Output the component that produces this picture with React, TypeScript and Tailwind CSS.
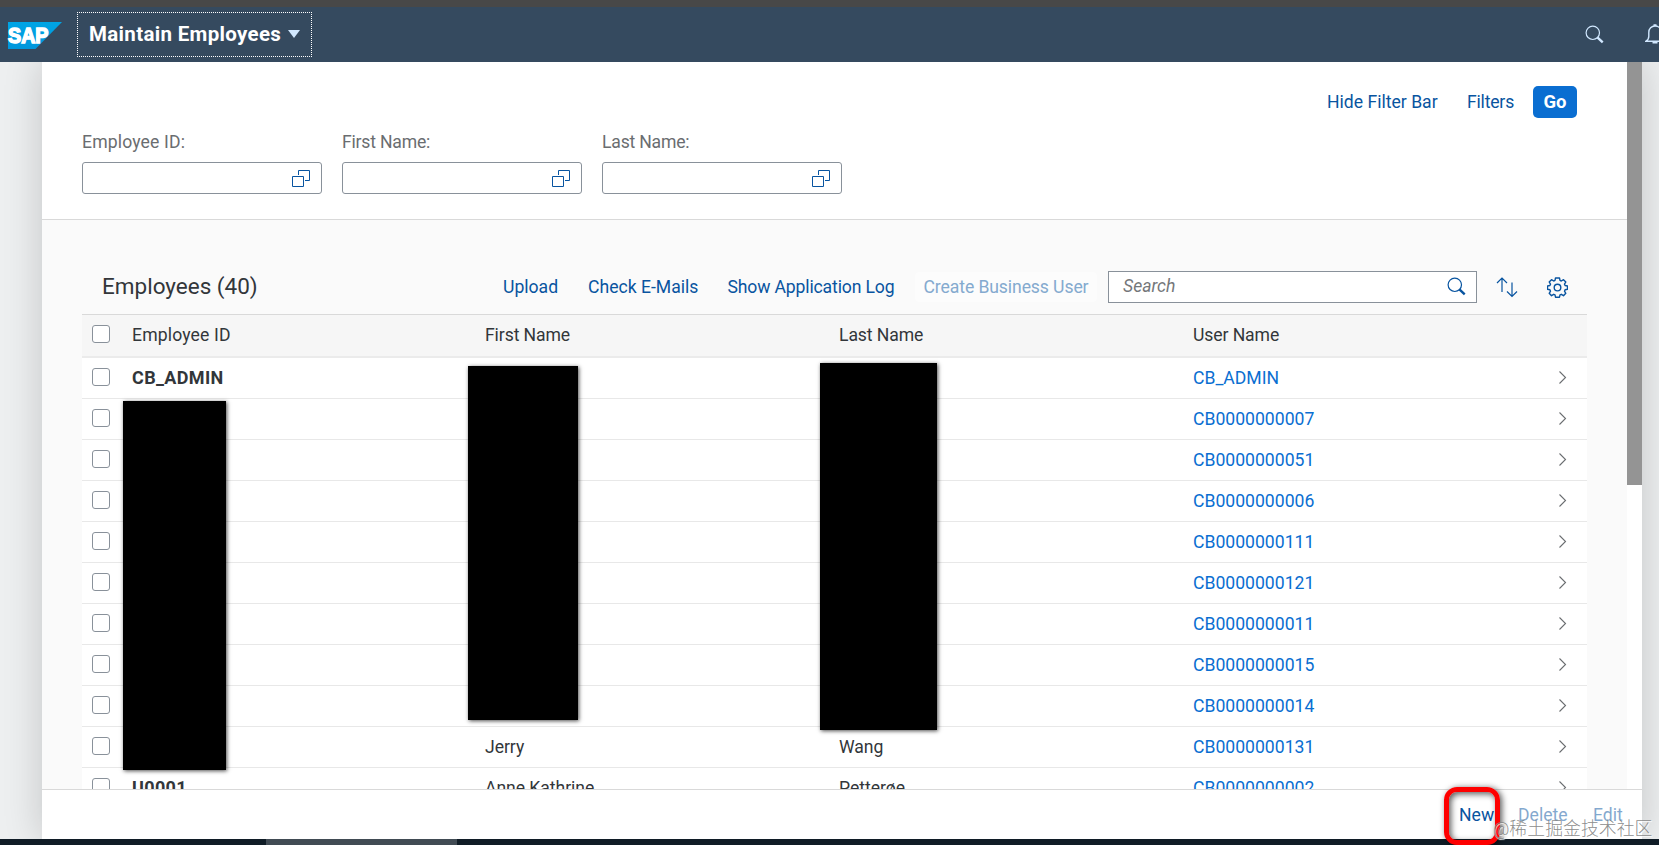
import type { ReactNode } from 'react';

type Employee = {
  id: string;
  firstName: string;
  lastName: string;
  userName: string;
};

const employees: Employee[] = [
  { id: 'CB_ADMIN', firstName: '', lastName: '', userName: 'CB_ADMIN' },
  { id: '', firstName: '', lastName: '', userName: 'CB0000000007' },
  { id: '', firstName: '', lastName: '', userName: 'CB0000000051' },
  { id: '', firstName: '', lastName: '', userName: 'CB0000000006' },
  { id: '', firstName: '', lastName: '', userName: 'CB0000000111' },
  { id: '', firstName: '', lastName: '', userName: 'CB0000000121' },
  { id: '', firstName: '', lastName: '', userName: 'CB0000000011' },
  { id: '', firstName: '', lastName: '', userName: 'CB0000000015' },
  { id: '', firstName: '', lastName: '', userName: 'CB0000000014' },
  { id: '', firstName: 'Jerry', lastName: 'Wang', userName: 'CB0000000131' },
  { id: 'U0001', firstName: 'Anne Kathrine', lastName: 'Petterøe', userName: 'CB0000000002' },
];

function SearchIcon({ className }: { className: string }) {
  return (
    <svg className={className} width="19" height="19" viewBox="0 0 19 19" fill="none" stroke="currentColor">
      <circle cx="7.8" cy="7.8" r="6.7" strokeWidth="1.2" />
      <path d="M12.4 12.4l5.3 5" strokeWidth="2.4" />
    </svg>
  );
}

function BellIcon() {
  return (
    <svg className="-mt-px shrink-0 text-[#d1e8ff]" width="20" height="20" viewBox="0 0 20 20" fill="none" stroke="currentColor" strokeWidth="1.4">
      <path d="M1 17.2h18c-1.8-1-2.8-2.6-2.8-5V8.5C16.2 4.5 13.5 2 10 2S3.8 4.5 3.8 8.5v3.7c0 2.4-1 4-2.8 5z" />
      <path d="M7.5 18.7h5M8.5 1.200h3" strokeWidth="1.8" />
    </svg>
  );
}

function ValueHelpIcon() {
  return (
    <svg width="18" height="18" viewBox="0 0 18 18" fill="none" stroke="#0854a0" strokeWidth="1">
      <path d="M6.5 5V.5h11v10H13" />
      <path d="M.5 6.5h11v10H.5z" />
    </svg>
  );
}

function SortIcon() {
  return (
    <svg width="22" height="21" viewBox="0 0 22 21" fill="none" stroke="#0854a0" strokeWidth="1.2">
      <path d="M6 15V1M1 6l5-5 5 5" />
      <path d="M16 5.5v14M11 14.5l5 5 5-5" />
    </svg>
  );
}

function SettingsIcon() {
  return (
    <svg width="21" height="21" viewBox="0 0 21 21" fill="none" stroke="#0854a0" strokeWidth="1.4">
      <path d="M8.5 1h4l.5 2.4 1.3.6 2.2-1.3 2.3 2.3-1.3 2.2.6 1.3 2.4.5v3.200l-2.400.6-.6 1.400 1.300 2.100-2.300 2.400-2.200-1.400-1.300.6-.5 2.300h-4L8 17.900l-1.300-.6-2.200 1.400-2.300-2.400 1.300-2.100-.6-1.400-2.400-.6V9l2.400-.5.6-1.300L2.200 5l2.300-2.300L6.700 4 8 3.400z" strokeLinejoin="round" />
      <circle cx="10.5" cy="10.6" r="3.3" />
    </svg>
  );
}

function Chevron() {
  return (
    <svg className="mb-[2px]" width="8" height="13" viewBox="0 0 8 13" fill="none" stroke="#6a6d70" strokeWidth="1.1">
      <path d="M.5.5l6 6-6 6" />
    </svg>
  );
}

function SapLogo() {
  return (
    <svg className="mt-[15px] ml-2 shrink-0 overflow-visible" width="54" height="27" viewBox="0 0 54 27">
      <defs>
        <linearGradient id="sap" x1="0" y1="0" x2="0" y2="1">
          <stop offset="0" stopColor="#00a5e5" />
          <stop offset="1" stopColor="#0096dc" />
        </linearGradient>
      </defs>
      <path d="M0 0h54L27.5 27H0z" fill="url(#sap)" />
      <text
        x="0"
        y="20.8"
        textLength="40.5"
        lengthAdjust="spacingAndGlyphs"
        fill="#fff"
        stroke="#fff"
        strokeWidth="1.5"
        fontSize="21.5"
        fontWeight="700"
        fontFamily="'Liberation Sans', sans-serif"
      >
        SAP
      </text>
    </svg>
  );
}

function Checkbox() {
  return <span className="block size-[18px] rounded-[3px] border border-[#89919a] bg-white" />;
}

function Action({ children, className }: { children: ReactNode; className?: string }) {
  return <button className={`whitespace-nowrap text-left text-[#0854a0] ${className ?? ''}`}>{children}</button>;
}

function ShellHeader() {
  return (
    <header className="flex h-[55px] shrink-0 bg-[#354a5f]">
      <SapLogo />
      <button className="mt-[5px] ml-[15px] flex h-[45px] w-[235px] shrink-0 items-center border border-dotted border-white pl-[11px] text-[20.5px] font-bold text-white">
        <span className="w-[199px] pb-[2px] text-left tracking-[0.33px] whitespace-nowrap">Maintain Employees</span>
        <span className="mt-[-2px] h-0 w-0 border-x-[6.5px] border-t-[8px] border-x-transparent border-t-[#d1e8ff]" />
      </button>
      <div className="ml-auto flex w-[74px] shrink-0 gap-[41px] overflow-hidden pt-[18px]">
        <SearchIcon className="shrink-0 text-[#d1e8ff]" />
        <BellIcon />
      </div>
    </header>
  );
}

function FilterField({ label, className }: { label: string; className: string }) {
  return (
    <label className="block w-[240px] pt-[5px] text-[#6a6d70]">
      <span className={`block h-[33px] leading-[26px] ${className}`}>{label}</span>
      <span className="flex h-8 items-center justify-end rounded-[3px] border border-[#89919a] bg-white pt-px pr-[11px]">
        <ValueHelpIcon />
      </span>
    </label>
  );
}

function FilterBar() {
  return (
    <section className="h-[158px] shrink-0 border-b border-[#d9d9d9] bg-white pl-10">
      <div className="flex h-[62px] items-end justify-end pr-[50px] pb-[6px]">
        <Action className="mb-[4px] w-[140px]">Hide Filter Bar</Action>
        <Action className="mb-[4px] w-[66px] tracking-[-0.2px]">Filters</Action>
        <button className="h-8 w-11 rounded-[5px] bg-[#0a6ed1] text-[18.5px] font-bold text-white">Go</button>
      </div>
      <div className="flex gap-5">
        <FilterField label="Employee ID:" className="tracking-[0.15px]" />
        <FilterField label="First Name:" className="tracking-[-0.2px]" />
        <FilterField label="Last Name:" className="tracking-[-0.2px]" />
      </div>
    </section>
  );
}

function TableToolbar() {
  return (
    <div className="flex h-[54px] items-center border-b border-[#d9d9d9] pb-[2px] pl-5">
      <h2 className="w-[401px] pb-[2px] text-[22.5px] text-[#32363a]">Employees (40)</h2>
      <Action className="w-[85px]">Upload</Action>
      <Action className="w-[139.5px]">Check E-Mails</Action>
      <Action className="w-[187px] tracking-[-0.15px]">Show Application Log</Action>
      <button className="h-[30px] w-[182px] rounded bg-[#fcfcfc] pl-[9px] text-left tracking-[-0.1px] whitespace-nowrap text-[#84aacf]">
        Create Business User
      </button>
      <div className="ml-[11.5px] flex h-8 w-[369px] items-center justify-between border border-[#89919a] bg-white pr-[10px] pl-[14px]">
        <span className="pb-[2px] text-[#74777a] italic">Search</span>
        <SearchIcon className="text-[#0854a0]" />
      </div>
      <div className="ml-[19px] flex items-center gap-[29px] pt-px">
        <SortIcon />
        <SettingsIcon />
      </div>
    </div>
  );
}

function EmployeeTable() {
  const columns = 'grid grid-cols-[50px_353px_354px_354px_366px_1fr] items-center';

  return (
    <div>
      <div className={`${columns} h-[43px] border-b-2 border-[#ebebeb] bg-[#f6f6f6] pb-px tracking-[-0.1px] text-[#32363a]`}>
        <div className="pb-[3px] pl-[10px]">
          <Checkbox />
        </div>
        <span className="tracking-[0.15px]">Employee ID</span>
        <span>First Name</span>
        <span>Last Name</span>
        <span>User Name</span>
      </div>
      {employees.map((employee) => (
        <div key={employee.userName} className={`${columns} h-[41px] border-b border-[#e8e8e8] bg-white text-[#32363a]`}>
          <div className="pb-[2px] pl-[10px]">
            <Checkbox />
          </div>
          <span className="text-[18px] font-bold tracking-[0.35px]">{employee.id}</span>
          <span className="tracking-[-0.05px]">{employee.firstName}</span>
          <span className="tracking-[-0.05px]">{employee.lastName}</span>
          <span className="text-[#0a6ed1]">{employee.userName}</span>
          <Chevron />
        </div>
      ))}
    </div>
  );
}

function FooterBar() {
  return (
    <footer className="flex h-[50px] shrink-0 items-center justify-end border-t border-[#d9d9d9] bg-white">
      <Action className="w-[59px]">New</Action>
      <Action className="w-[75px] opacity-50">Delete</Action>
      <Action className="w-[49px] opacity-50">Edit</Action>
    </footer>
  );
}

export default function App() {
  return (
    <div className="relative flex h-[845px] w-[1659px] flex-col overflow-hidden bg-[#edeff0] font-[Roboto,'Noto_Sans_CJK_SC',sans-serif] text-[17.6px] leading-6">
      <div className="h-[7px] shrink-0 bg-[#484848]" />
      <ShellHeader />

      <div className="flex min-h-0 flex-1 justify-start overflow-hidden bg-[#edeff0] pl-[42px]">
        <main className="flex w-[1600px] shrink-0 flex-col bg-white shadow-[0_0_36px_rgba(0,0,0,0.18)]">
          <div className="flex min-h-0 flex-1 overflow-hidden">
            <div className="flex w-[1585px] flex-col bg-[#fafafa]">
              <FilterBar />
              <section className="mt-[41px] mr-10 ml-10">
                <TableToolbar />
                <EmployeeTable />
              </section>
            </div>
            <div className="w-[15px] bg-white">
              <div className="h-[423px] bg-[#949494]" />
            </div>
          </div>
          <FooterBar />
        </main>
      </div>

      <div className="flex h-[6px] shrink-0 bg-[#101c26]">
        <div className="ml-[266px] w-[191px] bg-[#414b54]" />
      </div>

      {/* redacted columns */}
      <div className="absolute top-[401px] left-[123px] h-[369px] w-[103px] bg-black shadow-[1px_1px_4px_rgba(0,0,0,0.7)]" />
      <div className="absolute top-[366px] left-[468px] h-[354px] w-[110px] bg-black shadow-[1px_1px_4px_rgba(0,0,0,0.7)]" />
      <div className="absolute top-[363px] left-[820px] h-[367px] w-[117px] bg-black shadow-[1px_1px_4px_rgba(0,0,0,0.7)]" />

      {/* highlight around the New button */}
      <div className="absolute top-[787px] left-[1444px] h-[58px] w-[56px] rounded-[13px] border-[5px] border-[#fe0000] shadow-[2px_1px_6px_rgba(0,0,0,0.65),inset_2px_2px_6px_rgba(0,0,0,0.65)]" />
      <div className="absolute top-[817px] left-[1493px] text-[17.9px] font-light whitespace-nowrap text-[#808080]/90 [text-shadow:1px_1px_1px_#fff]">
        @稀土掘金技术社区
      </div>
    </div>
  );
}
